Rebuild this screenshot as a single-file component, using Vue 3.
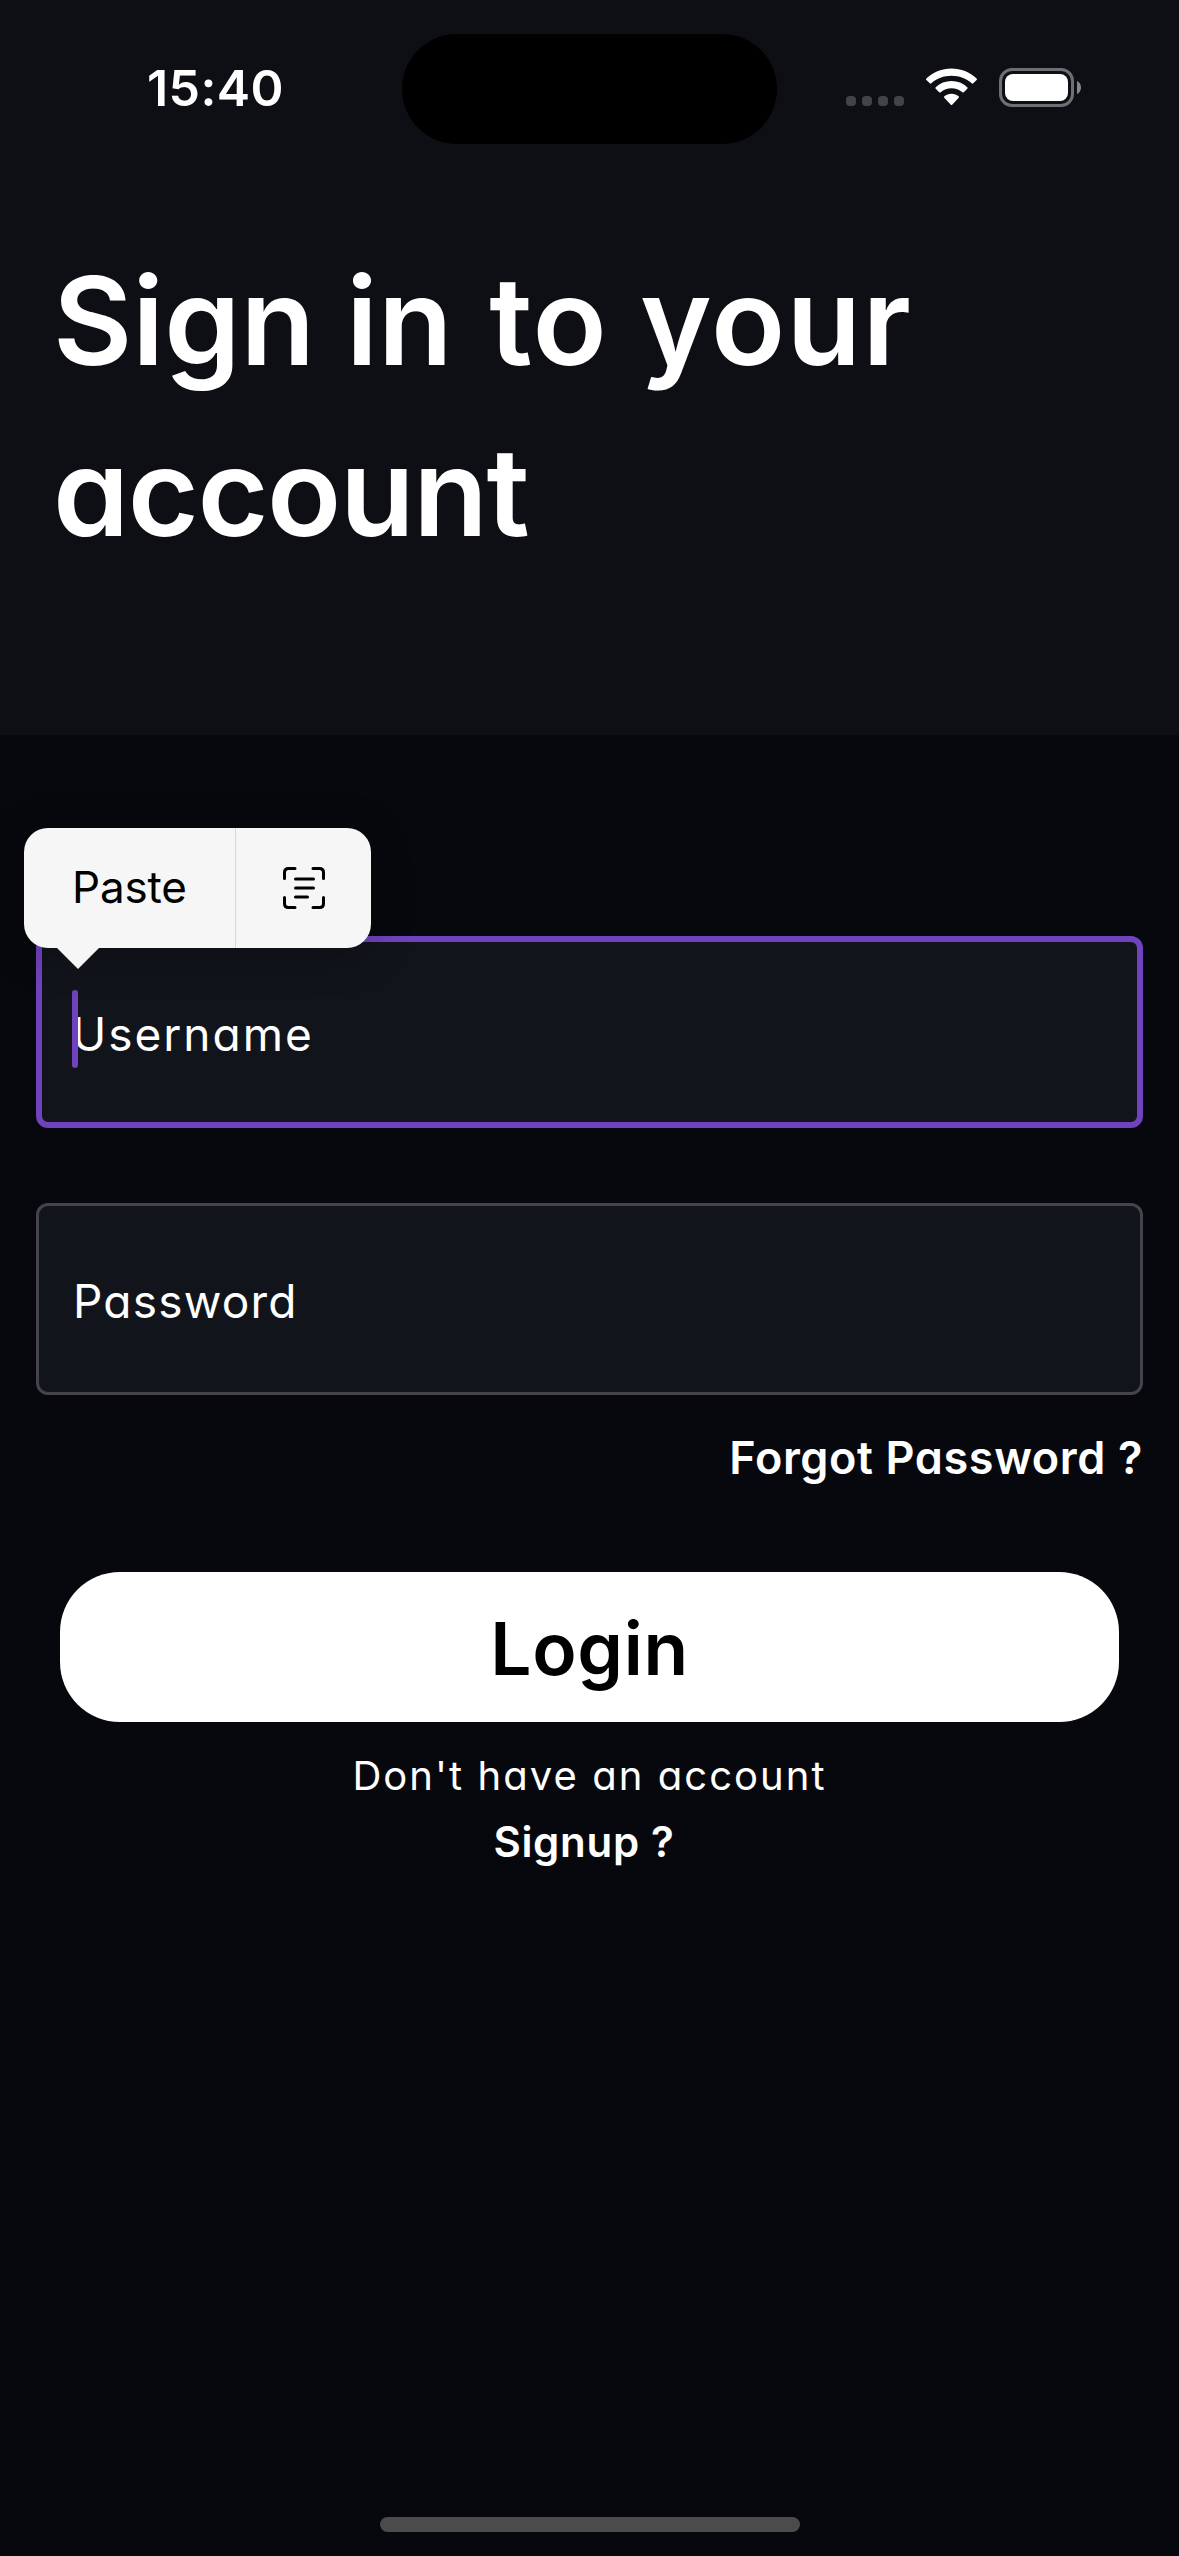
<template>
  <main class="screen">
    <header class="hero">
      <div class="status">
        <span class="time">15:40</span>
        <span class="island"></span>
        <div class="indicators">
          <div class="dots"><i></i><i></i><i></i><i></i></div>
          <svg class="wifi" viewBox="0 0 51 38" width="51" height="38">
            <path fill="#fff" d="M25.500 .5C35 .5 43.800 4 50.600 10.400Q51.300 11.200 50.600 12L47.200 15.300Q46.500 16 45.700 15.300C40.200 10.500 33.200 7.800 25.500 7.800S10.800 10.500 5.300 15.300Q4.500 16 3.800 15.300L.4 12Q-.3 11.200 .4 10.400C7.200 4 16 .5 25.500 .5Z" />
            <path fill="#fff" d="M25.500 13.100C31.500 13.100 37 15.300 41.300 19.200Q42 20 41.300 20.700L37.800 24.200Q37.100 24.800 36.300 24.200C33.300 21.700 29.600 20.300 25.500 20.300S17.700 21.700 14.700 24.200Q13.900 24.800 13.200 24.200L9.700 20.700Q9 20 9.700 19.200C14 15.300 19.500 13.100 25.500 13.100Z" />
            <path fill="#fff" d="M25.500 25.800C28.200 25.800 30.700 26.700 32.600 28.200Q33.400 29 32.700 29.800L26.200 36.700Q25.500 37.300 24.800 36.700L18.300 29.800Q17.600 29 18.400 28.200C20.300 26.700 22.800 25.800 25.500 25.800Z" />
          </svg>
          <svg class="battery" viewBox="0 0 82 39" width="82" height="39">
            <rect x="1.500" y="1.500" width="72" height="36" rx="11.500" fill="none" stroke="#6e6f72" stroke-width="3" />
            <rect x="6" y="6" width="63" height="27" rx="8" fill="#fff" />
            <path d="M78 13C80.500 14.200 82 16.600 82 19.500S80.500 24.800 78 26Z" fill="#86878a" />
          </svg>
        </div>
      </div>
      <h1>Sign in <span class="wide">to your</span><br><span class="tight">account</span></h1>
    </header>

    <form class="form" @submit.prevent>
      <div class="field focused">
        <span class="user">Username</span>
        <span class="caret"></span>
        <div class="menu">
          <span class="paste">Paste</span>
          <span class="scan">
            <svg viewBox="0 0 42 42" width="42" height="42" fill="none" stroke="#000" stroke-width="3" stroke-linecap="round">
              <path d="M1.500 11.500V5.500Q1.500 1.500 5.500 1.500H12M30 1.500H36.500Q40.500 1.500 40.500 5.500V11.500M40.500 30.500V36.500Q40.500 40.500 36.500 40.500H30M12 40.500H5.500Q1.500 40.500 1.500 36.500V30.500" />
              <path d="M12.500 12H30.500M12.500 21H30.500M12.500 30H24.500" />
            </svg>
          </span>
        </div>
      </div>
      <div class="field"><span class="pass">Password</span></div>
      <a class="forgot">Forgot Password ?</a>
      <button class="login">Login</button>
      <p class="hint">Don't have an account</p>
      <a class="signup">Signup ?</a>
    </form>
    <span class="home"></span>
  </main>
</template>

<script setup>
</script>

<style>
body { margin: 0; background: #07080d; }
</style>

<style scoped>
.screen {
  width: 1179px; height: 2556px; background: #07080d; color: #fff;
  display: flex; flex-direction: column; overflow: hidden;
  font-family: Inter, "Open Sans", sans-serif; font-feature-settings: "cv11" 1;
}
.hero { height: 735px; background: #0e0f14; flex: none; }
.status { height: 176px; box-sizing: border-box; display: grid; grid-template-columns: 402px 375px 1fr; }
.time { justify-self: start; margin: 58px 0 0 147px; font: 600 50px/60px Inter, sans-serif; letter-spacing: .4px; }
.island { margin-top: 34px; height: 110px; border-radius: 55px; background: #000; }
.indicators { display: flex; margin: 68px 0 0 69px; height: 39px; }
.dots { display: flex; gap: 6px; margin-top: 28px; width: 80px; }
.dots i { width: 10px; height: 10px; border-radius: 4px; background: #424347; }
.wifi { flex: none; }
.battery { margin-left: 22px; flex: none; }
h1 { margin: 59px 0 0 53px; font-size: 122px; line-height: 171px; font-weight: 600; }
.wide { margin-left: 6px; letter-spacing: 1.3px; }
.tight { letter-spacing: -1.4px; }
.form { flex: 1; display: flex; flex-direction: column; padding: 201px 36px 0; }
.field {
  position: relative; box-sizing: border-box; height: 192px; border: 3px solid #47434b; border-radius: 12px;
  background: #11141b; display: flex; align-items: center; padding: 4px 0 0 34px; margin-bottom: 75px;
  font-size: 46px;
}
.field + .field { margin-bottom: 35px; }
.focused { border: 6px solid #7142bd; padding-left: 30px; }
.user { letter-spacing: 2px; }
.pass { letter-spacing: 1.2px; }
.caret { position: absolute; left: 30px; top: 48px; width: 6px; height: 78px; border-radius: 3px; background: #7142bd; }
.menu {
  position: absolute; left: -18px; top: -114px; width: 347px; height: 120px; border-radius: 24px;
  background: #f6f6f6; color: #000; display: flex; box-shadow: 0 6px 40px rgba(0, 0, 0, .25);
}
.menu::after {
  content: ""; position: absolute; left: 33px; top: 120px; width: 42px; height: 21px;
  background: #f6f6f6; clip-path: polygon(0 0, 100% 0, 50% 100%);
}
.paste { width: 212px; border-right: 1px solid #d8d8d8; box-sizing: border-box; padding-left: 48px; font: 400 44px/119px Inter, sans-serif; letter-spacing: -.2px; font-feature-settings: normal; }
.scan { flex: 1; display: grid; place-items: center; }
.forgot { align-self: flex-end; font-size: 45px; line-height: 56px; font-weight: 600; letter-spacing: .6px; }
.login {
  margin: 86px 24px 21px; height: 150px; border: 0; border-radius: 60px; background: #fff; color: #000;
  font: inherit; font-feature-settings: inherit; font-size: 73px; font-weight: 600; letter-spacing: .7px; padding: 3px 0 0;
}
.hint { margin: 0; text-align: center; font-size: 40px; line-height: 66px; letter-spacing: 2.05px; }
.signup { text-align: center; font-size: 42px; line-height: 66px; font-weight: 600; letter-spacing: .7px; padding-right: 11px; }
.home { align-self: center; width: 420px; height: 15px; border-radius: 8px; background: #4b4b4b; margin-bottom: 24px; }
</style>
